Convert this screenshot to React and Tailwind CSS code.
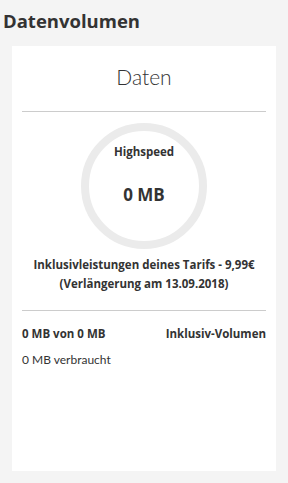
export default function App() {
  return (
    <div className="min-h-[483px] w-[288px] bg-[#f4f4f4] text-[#333] font-['Lato',sans-serif] pt-[10px] pb-[12px]">
      <h1 className="pl-[3px] font-['Open_Sans',sans-serif] text-[18.5px] font-bold leading-[22px]">Datenvolumen</h1>
      <div className="mx-[12px] mt-[14px] h-[425px] bg-white px-[10px] pt-[18px]">
        <div className="text-center text-[21px] font-light leading-[26px]">Daten</div>
        <div className="mt-[21px] h-px bg-[#cccccc]" />
        <div className="mt-[11px] flex justify-center">
          <div className="flex h-[126px] w-[126px] flex-col items-center rounded-full border-[8px] border-[#ebebeb] pt-[14px] font-['Open_Sans',sans-serif]">
            <div className="text-[11.5px] font-bold leading-[14px]">Highspeed</div>
            <div className="mt-[26px] text-[17px] font-bold leading-[20px]">0 MB</div>
          </div>
        </div>
        <div className="mt-[6px] text-center font-['Open_Sans',sans-serif] text-[11.5px] font-bold leading-[19px]">
          <div>Inklusivleistungen deines Tarifs - 9,99€</div>
          <div>(Verlängerung am 13.09.2018)</div>
        </div>
        <div className="mt-[17px] h-px bg-[#cccccc]" />
        <div className="mt-[16px] flex justify-between font-['Open_Sans',sans-serif] text-[11.5px] font-bold leading-[14px]">
          <span>0 MB von 0 MB</span>
          <span>Inklusiv-Volumen</span>
        </div>
        <div className="mt-[12px] text-[12px] leading-[14px]">0 MB verbraucht</div>
      </div>
    </div>
  );
}
